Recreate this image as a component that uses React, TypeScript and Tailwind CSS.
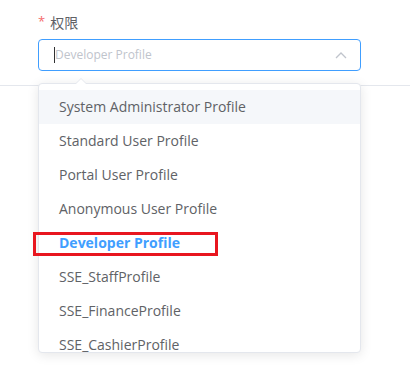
import React from "react";

const OPTIONS = [
  "System Administrator Profile",
  "Standard User Profile",
  "Portal User Profile",
  "Anonymous User Profile",
  "Developer Profile",
  "SSE_StaffProfile",
  "SSE_FinanceProfile",
  "SSE_CashierProfile",
];

export default function App() {
  const selected = "Developer Profile";
  const hovered = "System Administrator Profile";

  return (
    <div
      className="relative h-[376px] w-[410px] overflow-hidden bg-white text-[14px] text-[#606266]"
      style={{ fontFamily: '"Open Sans", "Noto Sans CJK SC", sans-serif' }}
    >
      {/* form section */}
      <div className="h-[86px] border-b border-[#e4e7ed] px-[38px] pt-[12px]">
        <div className="flex h-[20px] items-center gap-[5px]">
          <span className="text-[13px] text-[#f56c6c]">*</span>
          <span className="text-[14px] text-[#606266]">权限</span>
        </div>
        <div className="mt-[7px] flex h-[32px] w-[323px] items-center rounded-[4px] border border-[#409eff] pl-[15px] pr-[12px]">
          <span className="h-[16px] w-px bg-[#303133]" />
          <span className="flex-1 text-[12px] text-[#c0c4cc]">Developer Profile</span>
          <svg width="12" height="8" viewBox="0 0 12 8" className="mr-[1px]">
            <polyline points="1,7 6,2 11,7" fill="none" stroke="#c0c4cc" strokeWidth="1.3" />
          </svg>
        </div>
      </div>

      {/* dropdown popper */}
      <div className="absolute left-[38px] top-[83px] h-[270px] w-[323px] rounded-[4px] border border-[#e4e7ed] bg-white shadow-[0_2px_12px_rgba(0,0,0,0.1)]">
        <div className="absolute -top-[6px] left-[36px] h-0 w-0 border-x-[6px] border-b-[6px] border-x-transparent border-b-[#e4e7ed]" />
        <div className="absolute -top-[5px] left-[37px] h-0 w-0 border-x-[5px] border-b-[5px] border-x-transparent border-b-white" />
        <div className="h-full overflow-hidden rounded-[4px]">
          <ul className="py-[6px]">
            {OPTIONS.map((o) => (
              <li
                key={o}
                className={
                  "h-[34px] px-[20px] leading-[34px] " +
                  (o === hovered ? "bg-[#f5f7fa] " : "") +
                  (o === selected ? "font-bold text-[#409eff]" : "text-[#606266]")
                }
              >
                {o}
              </li>
            ))}
          </ul>
        </div>
      </div>

      {/* annotation */}
      <div className="absolute left-[33px] top-[232px] h-[24px] w-[185px] border-[3px] border-[#e8161f]" />
    </div>
  );
}
